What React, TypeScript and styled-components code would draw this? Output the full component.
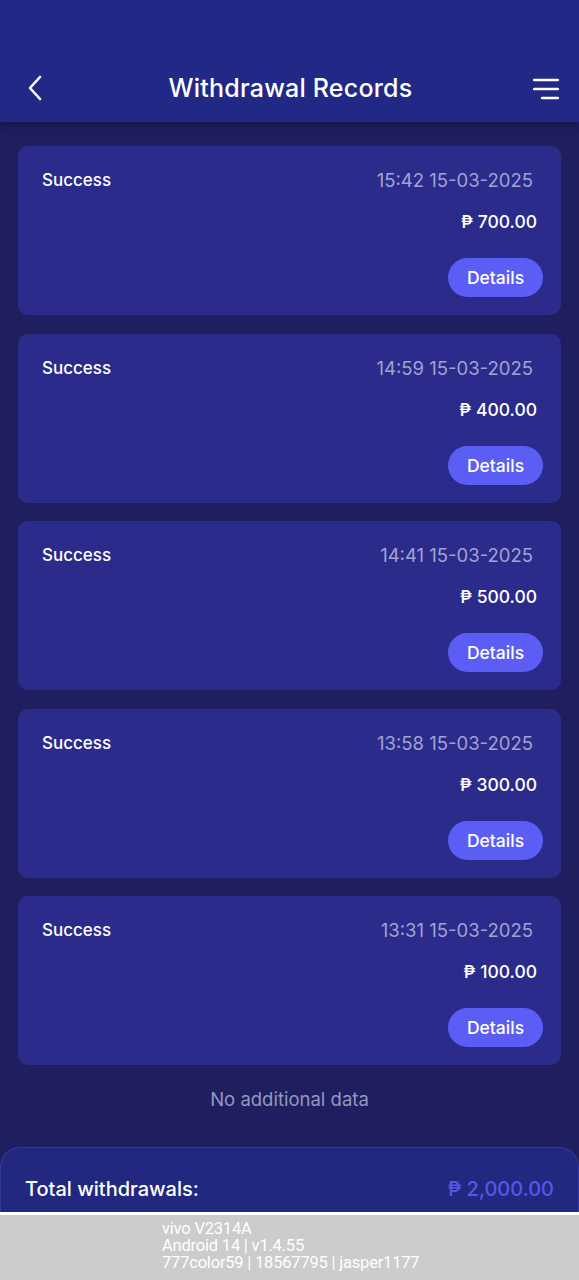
import React from 'react';
import styled, { createGlobalStyle } from 'styled-components';

const GlobalStyle = createGlobalStyle`
  html, body {
    margin: 0;
    padding: 0;
    background: #1f1f60;
  }
  body {
    font-family: Inter, 'Noto Sans', 'Liberation Sans', sans-serif;
    -webkit-font-smoothing: antialiased;
  }
`;

const Page = styled.div`
  width: 579px;
  height: 1280px;
  display: flex;
  flex-direction: column;
  background: #1f1f60;
  overflow: hidden;
`;

const Header = styled.header`
  height: 122px;
  flex-shrink: 0;
  background: #222886;
  display: flex;
  align-items: flex-end;
  justify-content: space-between;
  padding: 0 20px 19px 22px;
  box-sizing: border-box;
  box-shadow: 0 4px 8px rgba(10, 10, 50, 0.45);
  position: relative;
  z-index: 1;
`;

const IconButton = styled.button`
  width: 26px;
  height: 30px;
  padding: 0;
  border: none;
  background: transparent;
  display: flex;
  align-items: center;
  justify-content: center;
`;

const Title = styled.h1`
  margin: 0;
  color: #ffffff;
  font-size: 25px;
  font-weight: 500;
  letter-spacing: 0.2px;
  line-height: 30px;
`;

const List = styled.main`
  flex: 1;
  display: flex;
  flex-direction: column;
  gap: 18.5px;
  padding: 24px 18px 0 18px;
`;

const Card = styled.div`
  height: 169px;
  box-sizing: border-box;
  background: #2a2b8b;
  border-radius: 10px;
  padding: 22px 18px 18px 24px;
  display: flex;
  flex-direction: column;
`;

const TopRow = styled.div`
  display: flex;
  justify-content: space-between;
  align-items: center;
  padding-right: 10px;
  height: 24px;
`;

const Status = styled.span`
  color: #ffffff;
  font-size: 17px;
  font-weight: 500;
`;

const DateText = styled.span`
  color: #a0a2d2;
  font-size: 18.5px;
`;

const Amount = styled.div`
  align-self: flex-end;
  margin-top: 17px;
  padding-right: 6px;
  color: #ffffff;
  font-size: 17.5px;
  font-weight: 500;
  height: 26px;
  line-height: 26px;
`;

const DetailsButton = styled.button`
  align-self: flex-end;
  margin-top: auto;
  width: 95px;
  height: 39px;
  border: none;
  border-radius: 20px;
  background: #5b5df5;
  color: #ffffff;
  font-family: inherit;
  font-size: 17.5px;
  font-weight: 500;
`;

const EmptyNote = styled.div`
  text-align: center;
  color: #9597c0;
  font-size: 18.5px;
  margin-top: 4px;
`;

const Footer = styled.footer`
  margin-top: auto;
  height: 65px;
  flex-shrink: 0;
  background: #22287f;
  border: 1px solid #34399a;
  border-bottom: none;
  border-radius: 20px 20px 0 0;
  display: flex;
  align-items: center;
  justify-content: space-between;
  padding: 17px 24px 0 24px;
  box-sizing: border-box;
`;

const TotalLabel = styled.span`
  color: #ffffff;
  font-size: 20px;
  font-weight: 500;
`;

const TotalValue = styled.span`
  color: #5357ea;
  font-size: 20px;
  font-weight: 500;
`;

const DebugBar = styled.div`
  height: 68px;
  flex-shrink: 0;
  background: #cccccc;
  border-top: 3px solid #ffffff;
  padding: 5px 0 0 162px;
  box-sizing: border-box;
  color: #ffffff;
  font-family: Roboto, 'Liberation Sans', Arial, sans-serif;
  font-size: 16.5px;
  line-height: 17px;
  letter-spacing: -0.2px;
`;

const DebugLine = styled.div`
  height: 17px;
  overflow: visible;
  white-space: nowrap;
`;

const records = [
  { time: '15:42 15-03-2025', amount: '700.00' },
  { time: '14:59 15-03-2025', amount: '400.00' },
  { time: '14:41 15-03-2025', amount: '500.00' },
  { time: '13:58 15-03-2025', amount: '300.00' },
  { time: '13:31 15-03-2025', amount: '100.00' },
];

const App = () => {
  return (
    <Page>
      <GlobalStyle />
      <Header>
        <IconButton aria-label="back">
          <svg width="16" height="26" viewBox="0 0 16 26">
            <path d="M13 2 L3 13 L13 24" fill="none" stroke="#fff" strokeWidth="2.6" strokeLinecap="round" strokeLinejoin="round" />
          </svg>
        </IconButton>
        <Title>Withdrawal Records</Title>
        <IconButton aria-label="menu">
          <svg width="26" height="24" viewBox="0 0 26 24">
            <path d="M1 4 H25 M1 13 H25 M9 22 H25" stroke="#fff" strokeWidth="2.4" strokeLinecap="round" />
          </svg>
        </IconButton>
      </Header>
      <List>
        {records.map((record, index) => (
          <Card key={index}>
            <TopRow>
              <Status>Success</Status>
              <DateText>{record.time}</DateText>
            </TopRow>
            <Amount>₱ {record.amount}</Amount>
            <DetailsButton>Details</DetailsButton>
          </Card>
        ))}
        <EmptyNote>No additional data</EmptyNote>
      </List>
      <Footer>
        <TotalLabel>Total withdrawals:</TotalLabel>
        <TotalValue>₱ 2,000.00</TotalValue>
      </Footer>
      <DebugBar>
        <DebugLine>vivo V2314A</DebugLine>
        <DebugLine>Android 14 | v1.4.55</DebugLine>
        <DebugLine>777color59 | 18567795 | jasper1177</DebugLine>
      </DebugBar>
    </Page>
  );
};

export default App;
